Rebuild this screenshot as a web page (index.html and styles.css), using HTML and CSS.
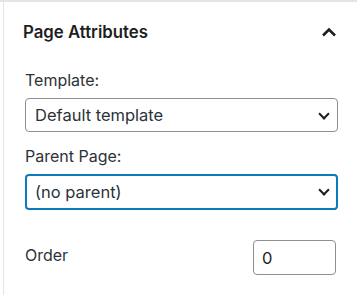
FILE: index.html
```html
<!DOCTYPE html>
<html lang="en">
<head>
    <meta charset="UTF-8">
    <meta name="viewport" content="width=device-width, initial-scale=1.0">
    <title>Page Attributes</title>
    <link rel="stylesheet" href="styles.css">
</head>
<body>
    <div class="frame">
        <div class="panel">
            <div class="panel-header">
                <h2>Page Attributes</h2>
                <svg class="toggle" width="24" height="24" viewBox="0 0 24 24">
                    <path d="M6 15.5 12 9.5l6 6" fill="none" stroke="#1e1e1e" stroke-width="2.6"/>
                </svg>
            </div>

            <div class="fields">
                <label class="field-label" for="template">Template:</label>
                <div class="select-wrap">
                    <select id="template">
                        <option>Default template</option>
                    </select>
                </div>

                <label class="field-label" for="parent">Parent Page:</label>
                <div class="select-wrap focused">
                    <select id="parent">
                        <option>(no parent)</option>
                    </select>
                </div>

                <div class="order-row">
                    <label for="order">Order</label>
                    <input type="text" id="order" value="0">
                </div>
            </div>
        </div>
    </div>
</body>
</html>
```

FILE: styles.css
```css
body {
    margin: 0;
    background: #fff;
    font-family: Inter, "Liberation Sans", Arial, sans-serif;
    color: #1e1e1e;
}
.frame {
    border-top: 2px solid #e2e4e7;
    padding-left: 3px;
    height: 293px;
}
.panel {
    border-left: 1px solid #e2e4e7;
    height: 100%;
    padding: 0 19px 0 19px;
}
.panel-header {
    display: flex;
    align-items: center;
    justify-content: space-between;
    height: 60px;
}
.panel-header h2 {
    margin: 0;
    font-size: 16.8px;
    font-weight: 600;
    color: #1e1e1e;
}
.toggle {
    margin-right: -3px;
}
.fields {
    padding-left: 2px;
}
.field-label {
    display: block;
    margin-top: 8px;
    font-size: 16px;
    line-height: 20px;
    color: #2c3338;
}
.select-wrap {
    position: relative;
    margin-top: 8px;
    margin-bottom: 14px;
}
.select-wrap::after {
    content: "";
    position: absolute;
    right: 10px;
    top: 12px;
    width: 6px;
    height: 6px;
    border-right: 2px solid #1e1e1e;
    border-bottom: 2px solid #1e1e1e;
    transform: rotate(45deg);
    pointer-events: none;
}
select {
    appearance: none;
    width: 100%;
    height: 34px;
    padding: 0 30px 0 9px;
    font-family: inherit;
    font-size: 16.5px;
    color: #2c3338;
    background: #fff;
    border: 1px solid #8c8f94;
    border-radius: 4px;
}
.focused select {
    height: 36px;
    border: 2px solid #0a7cba;
    padding-left: 8px;
}
.order-row {
    display: flex;
    align-items: center;
    justify-content: space-between;
    margin-top: 30px;
}
.order-row label {
    font-size: 16px;
    color: #2c3338;
    margin-bottom: 5px;
}
.order-row input {
    width: 83px;
    height: 35px;
    box-sizing: border-box;
    padding: 0 8px;
    margin-right: 2px;
    font-family: inherit;
    font-size: 16.5px;
    color: #1e1e1e;
    border: 1px solid #8c8f94;
    border-radius: 4px;
}
```
